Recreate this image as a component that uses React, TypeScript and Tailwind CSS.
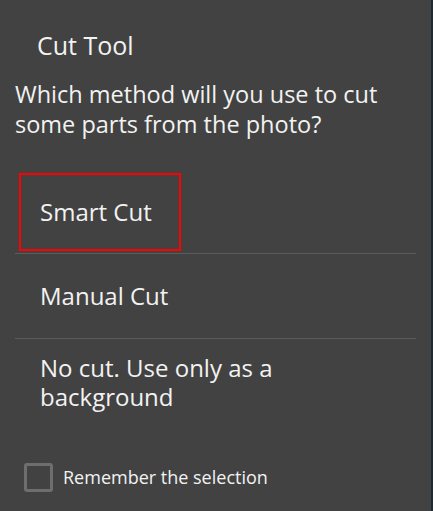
export default function App() {
  return (
    <div
      className="w-[433px] h-[511px] bg-[#424242] text-[#f2f2f2] overflow-hidden border-r-2 border-[#1f2a30]"
      style={{ fontFamily: '"Open Sans", "Noto Sans", sans-serif' }}
    >
      <h1 className="pl-[37px] pt-[28px] text-[25px] leading-[34px]">Cut Tool</h1>
      <p className="px-[15px] mt-[17px] text-[23.5px] leading-[30px]">
        Which method will you use to cut some parts from the photo?
      </p>

      <div className="mx-[15px] mt-[34px]">
        <div className="h-[81px] border-b border-[#5c5c5c] flex items-start">
          <div className="ml-[4px] w-[162px] h-[78px] border-2 border-[#ff0000] flex items-center pl-[19px] text-[24px]">
            Smart Cut
          </div>
        </div>
        <div className="h-[85px] border-b border-[#5c5c5c] flex items-center pl-[25px] text-[24px]">
          Manual Cut
        </div>
        <div className="pl-[25px] pt-[14px] text-[24px] leading-[29px] w-[320px]">
          No cut. Use only as a background
        </div>
      </div>

      <label className="flex items-center gap-[10px] pl-[24px] mt-[52px]">
        <span className="w-[29px] h-[29px] rounded-[3px] border-[3px] border-[#6e6e6e]" />
        <span className="text-[18px]">Remember the selection</span>
      </label>
    </div>
  );
}
